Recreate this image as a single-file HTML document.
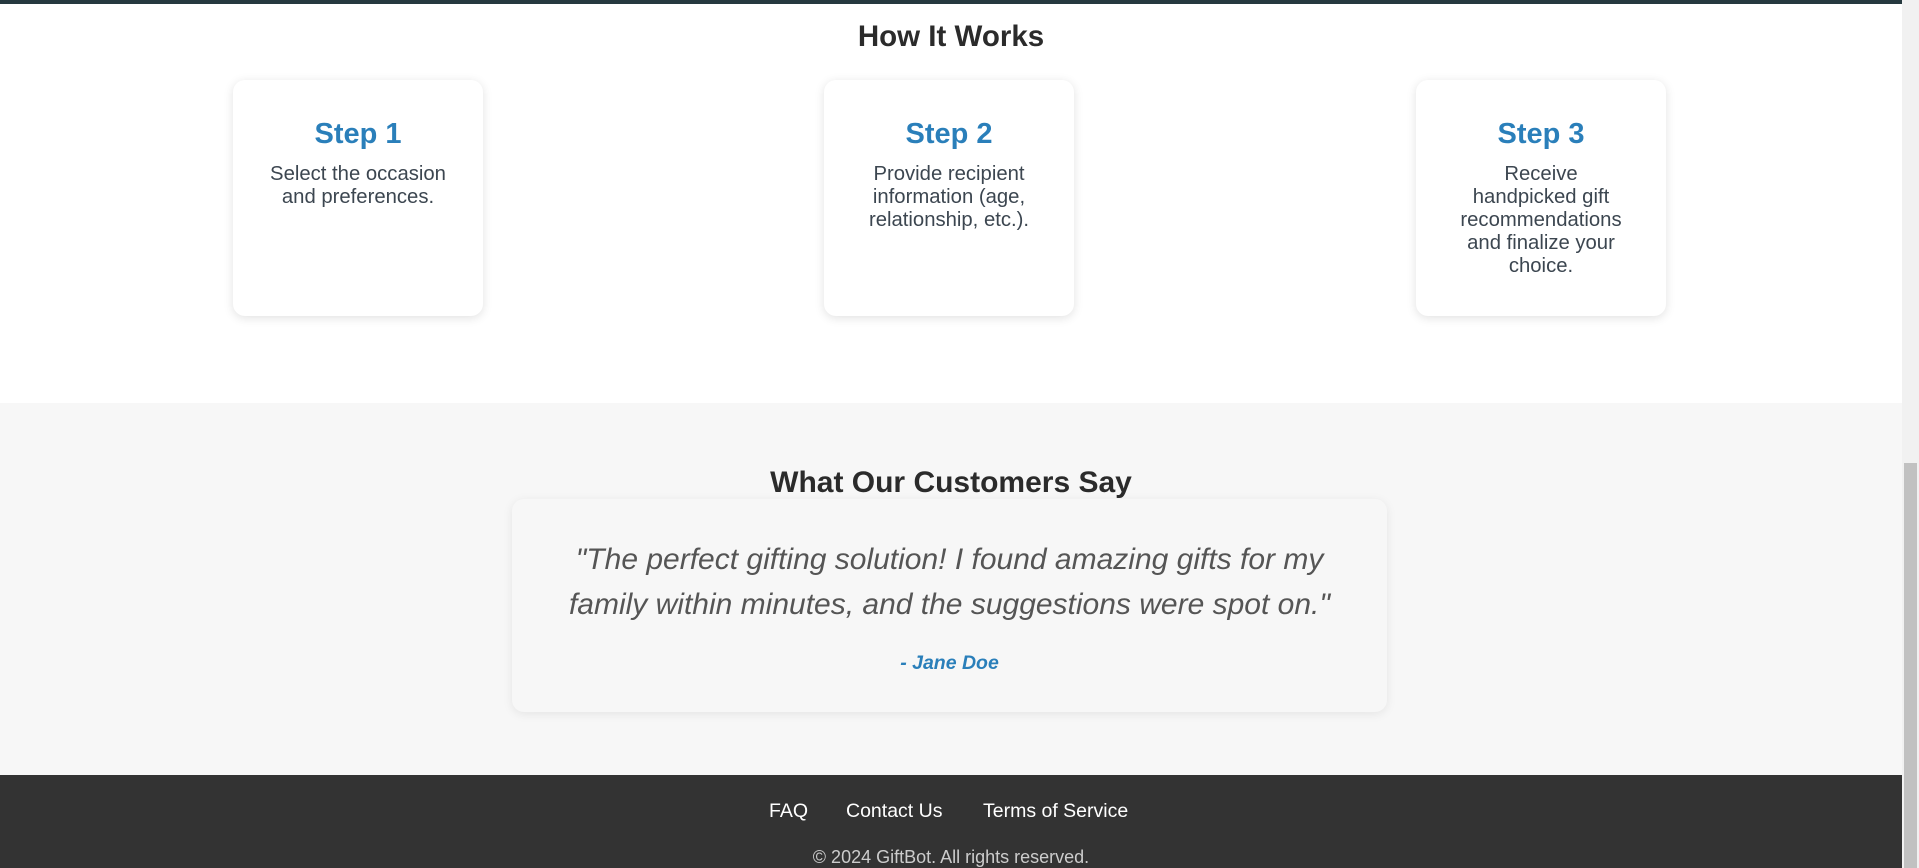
<!DOCTYPE html>
<html><head><style>
html,body{margin:0;padding:0;}
body{width:1919px;height:868px;overflow:hidden;font-family:"Liberation Sans",Arial,sans-serif;position:relative;background:#fff;}
.main{position:absolute;left:0;top:0;width:1902px;height:868px;}
.topbar{position:absolute;left:0;top:0;width:1902px;height:4px;background:#26393f;}
h2{margin:0;position:absolute;left:0;width:1902px;text-align:center;font-size:29.5px;font-weight:bold;color:#2b2b2b;}
.card{position:absolute;top:80px;width:250px;height:236px;background:#fff;border-radius:12px;box-shadow:0 2px 10px rgba(0,0,0,0.12);text-align:center;box-sizing:border-box;padding:0 35px;}
.card h3{margin:37px 0 0;font-size:29px;color:#2a7fba;line-height:34px;}
.card p{margin:12px 0 0;font-size:20.3px;line-height:23px;color:#3c4650;}
.gray{position:absolute;left:0;top:403px;width:1902px;height:372px;background:#f7f7f7;}
.quote{position:absolute;left:512px;top:499px;width:875px;height:213px;background:#f7f7f7;border-radius:12px;box-shadow:0 2px 10px rgba(0,0,0,0.08);text-align:center;}
.quote p{margin:38px 0 0;font-size:30px;font-style:italic;line-height:45px;color:#555;}
.quote .a{margin-top:24px;font-size:19.5px;font-weight:bold;font-style:italic;color:#2a7fba;line-height:24px;}
.foot{position:absolute;left:0;top:775px;width:1902px;height:93px;background:#333;color:#fff;}
.foot a{position:absolute;top:25px;font-size:19.5px;color:#fff;text-decoration:none;}
.copy{position:absolute;top:72px;left:0;width:1902px;text-align:center;font-size:18px;color:#ccc;}
.sb{position:absolute;left:1902px;top:0;width:17px;height:868px;background:#f1f1f1;}
.thumb{position:absolute;left:1904px;top:463px;width:13px;height:405px;background:#c1c1c1;}
</style></head><body>
<div class="main">
<div class="topbar"></div>
<h2 style="top:20px">How It Works</h2>
<div class="card" style="left:233px"><h3>Step 1</h3><p>Select the occasion and preferences.</p></div>
<div class="card" style="left:824px"><h3>Step 2</h3><p>Provide recipient information (age, relationship, etc.).</p></div>
<div class="card" style="left:1416px"><h3>Step 3</h3><p>Receive handpicked gift recommendations and finalize your choice.</p></div>
<div class="gray"></div>
<h2 style="top:466px;font-size:30px">What Our Customers Say</h2>
<div class="quote"><p>"The perfect gifting solution! I found amazing gifts for my<br>family within minutes, and the suggestions were spot on."</p><div class="a">- Jane Doe</div></div>
<div class="foot">
<a style="left:769px">FAQ</a><a style="left:846px">Contact Us</a><a style="left:983px">Terms of Service</a>
<div class="copy">© 2024 GiftBot. All rights reserved.</div>
</div>
</div>
<div class="sb"></div><div class="thumb"></div>
</body></html>
